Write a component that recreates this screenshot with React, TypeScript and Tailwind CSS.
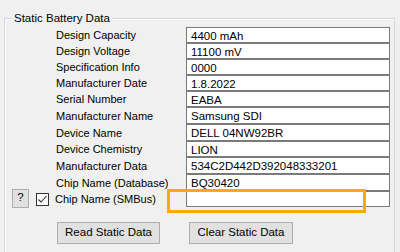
import React from "react";

const rows: { label: string; value: string; h: string }[] = [
  { label: "Design Capacity", value: "4400 mAh", h: "h-[16px]" },
  { label: "Design Voltage", value: "11100 mV", h: "h-[16px]" },
  { label: "Specification Info", value: "0000", h: "h-[16px]" },
  { label: "Manufacturer Date", value: "1.8.2022", h: "h-[16px]" },
  { label: "Serial Number", value: "EABA", h: "h-[16px]" },
  { label: "Manufacturer Name", value: "Samsung SDI", h: "h-[17px]" },
  { label: "Device Name", value: "DELL 04NW92BR", h: "h-[17px]" },
  { label: "Device Chemistry", value: "LION", h: "h-[16px]" },
  { label: "Manufacturer Data", value: "534C2D442D392048333201", h: "h-[17px]" },
  { label: "Chip Name (Database)", value: "BQ30420", h: "h-[17px]" },
];

function ValueBox({ value, h }: { value: string; h: string }) {
  return (
    <div
      className={`${h} w-[204px] border border-[#7a7a7a] bg-white pl-[4px] pt-[1px] text-[11.5px] leading-[14px] flex items-center overflow-hidden whitespace-nowrap`}
    >
      {value}
    </div>
  );
}

export default function App() {
  return (
    <div
      className="relative w-[400px] h-[252px] overflow-hidden bg-[#f0f0f0] text-[11px] text-black"
      style={{ fontFamily: '"Liberation Sans", Arial, sans-serif' }}
    >
      {/* Group box */}
      <div className="ml-[4px] mt-[18px] w-[391px] h-[250px] border border-[#d5d5d5] shadow-[inset_1px_1px_0_#ffffff] pt-[8px]">
        <div className="flex flex-col">
          {rows.map((row) => (
            <div key={row.label} className={`flex ${row.h}`}>
              <div className="w-[181px] pl-[51px] pt-[1px] flex items-center whitespace-nowrap">
                {row.label}
              </div>
              <ValueBox value={row.value} h={row.h} />
            </div>
          ))}

          {/* SMBus row */}
          <div className="flex h-[16px]">
            <div className="w-[181px] flex items-center">
              <button className="ml-[7px] -mt-[2px] w-[17px] h-[19px] border border-[#adadad] bg-[#e1e1e1] flex items-center justify-center text-[11.5px]">
                ?
              </button>
              <div className="ml-[7px] w-[13px] h-[13px] border border-[#333333] bg-white flex items-center justify-center">
                <svg width="11" height="11" viewBox="0 0 11 11">
                  <polyline
                    points="1.5,5.5 4,8 9.5,2"
                    fill="none"
                    stroke="#333333"
                    strokeWidth="1.1"
                  />
                </svg>
              </div>
              <span className="ml-[6px] pt-[1px] whitespace-nowrap">Chip Name (SMBus)</span>
            </div>
            <ValueBox value="" h="h-[16px]" />
          </div>

          {/* Buttons */}
          <div className="flex mt-[15px] pl-[52px] gap-[29px] text-[11.5px]">
            <button className="w-[103px] h-[22px] border border-[#adadad] bg-[#e1e1e1] flex items-center justify-center">
              Read Static Data
            </button>
            <button className="w-[104px] h-[22px] border border-[#adadad] bg-[#e1e1e1] flex items-center justify-center">
              Clear Static Data
            </button>
          </div>
        </div>
      </div>

      {/* Group title over border */}
      <div className="absolute left-[12px] top-[11px] px-[2px] bg-[#f0f0f0] text-[11.5px] leading-[14px]">
        Static Battery Data
      </div>

      {/* Orange highlight */}
      <div className="absolute left-[167px] top-[189px] w-[199px] h-[24px] border-[3px] border-[#f8ac00]" />
    </div>
  );
}
